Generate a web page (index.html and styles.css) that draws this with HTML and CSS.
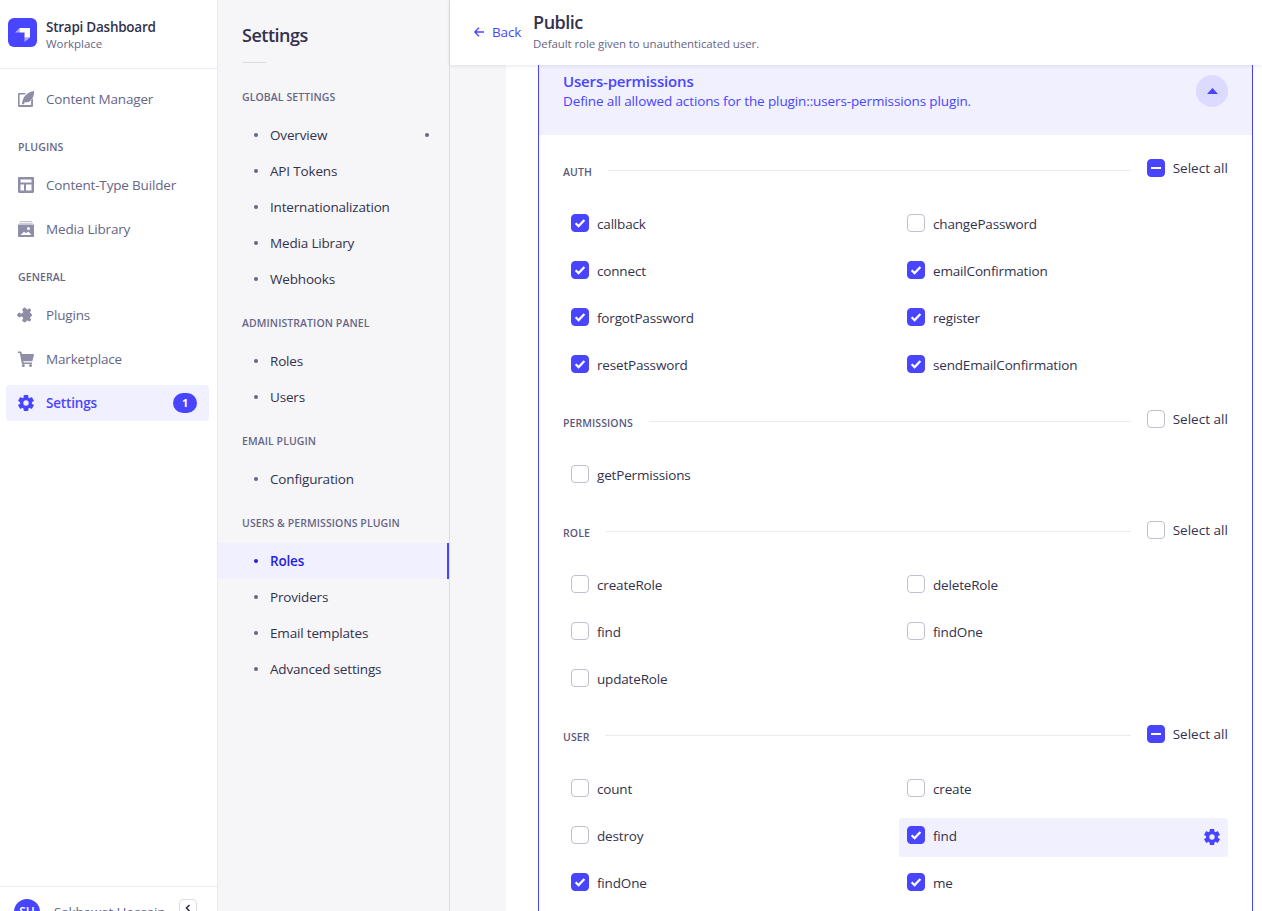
FILE: index.html
```html
<!DOCTYPE html>
<html lang="en">
<head>
    <meta charset="UTF-8">
    <title>Strapi Dashboard - Public role</title>
    <link rel="stylesheet" href="styles.css">
</head>
<body>
    <svg class="sprite" aria-hidden="true">
        <symbol id="check" viewBox="0 0 18 18"><path d="M4.600 9.200l3 2.900 5.800-6" fill="none" stroke="#fff" stroke-width="2.200"/></symbol>
        <symbol id="cog" viewBox="0 0 24 24">
            <path fill-rule="evenodd" d="M12 3a9 9 0 1 0 0 18 9 9 0 0 0 0-18zm0 5a4 4 0 1 1 0 8 4 4 0 0 1 0-8z"/>
            <rect x="8.500" y="0" width="7" height="5" rx="1"/>
            <rect x="8.500" y="0" width="7" height="5" rx="1" transform="rotate(60 12 12)"/>
            <rect x="8.500" y="0" width="7" height="5" rx="1" transform="rotate(120 12 12)"/>
            <rect x="8.500" y="0" width="7" height="5" rx="1" transform="rotate(180 12 12)"/>
            <rect x="8.500" y="0" width="7" height="5" rx="1" transform="rotate(240 12 12)"/>
            <rect x="8.500" y="0" width="7" height="5" rx="1" transform="rotate(300 12 12)"/>
        </symbol>
    </svg>

    <div class="app">
        <aside class="sidebar">
            <div class="brand">
                <svg class="brand-logo" viewBox="0 0 29 29">
                    <rect width="29" height="29" rx="6" fill="#4945ff"/>
                    <path d="M22 10v9.500h-5.500v-5h-5v-4.500z" fill="#fff"/>
                    <path d="M11.500 10v4.500h-4.500z M16.500 19.500h5.500l-5.500 4.500z" fill="#fff" opacity=".55"/>
                </svg>
                <div class="brand-text">
                    <div class="brand-name">Strapi Dashboard</div>
                    <div class="brand-sub">Workplace</div>
                </div>
            </div>
            <nav class="main-nav">
                <a class="nav-item">
                    <svg class="nav-icon" viewBox="0 0 16 16"><path d="M0 3.200C0 2.500.5 2 1.200 2H8L6.600 3.500H1.600v10.500h11.500V9.400L15 7.600v7.200c0 .7-.5 1.200-1.200 1.200H1.200C.5 16 0 15.500 0 14.800z"/><path d="M16 0c.3 4-1 9.500-6.500 11.200H6.500l-.5 2H4C4.500 6 9 1 16 0z"/></svg>
                    Content Manager
                </a>
                <div class="nav-label">Plugins</div>
                <a class="nav-item">
                    <svg class="nav-icon" viewBox="0 0 16 16"><path fill-rule="evenodd" d="M1.200 0h13.600c.7 0 1.200.5 1.200 1.200v13.600c0 .7-.5 1.200-1.200 1.200H1.200C.5 16 0 15.500 0 14.800V1.200C0 .5.500 0 1.200 0zM2.500 2.500v3h11v-3zM2.500 7.500v6h3.500v-6zM8 7.500v6h5.500v-6z"/></svg>
                    Content-Type Builder
                </a>
                <a class="nav-item">
                    <svg class="nav-icon" viewBox="0 0 16 16"><path d="M2 0h12v1H2z" opacity=".55"/><path d="M1.200 1.800h13.600v1H1.200z" opacity=".55"/><path fill-rule="evenodd" d="M1 3.500h14c.6 0 1 .4 1 1V15c0 .6-.4 1-1 1H1c-.6 0-1-.4-1-1V4.500c0-.6.4-1 1-1zM10.500 6a1.500 1.500 0 1 0 0 3 1.500 1.500 0 0 0 0-3zM2.500 14h11l-3.200-3.500-2.300 1.800-2-1.500z"/></svg>
                    Media Library
                </a>
                <div class="nav-label">General</div>
                <a class="nav-item">
                    <svg class="nav-icon puzzle" viewBox="0 0 24 24"><path transform="rotate(45 12 12)" d="M20.500 11H19V7c0-1.100-.9-2-2-2h-4V3.500C13 2.120 11.880 1 10.500 1S8 2.120 8 3.500V5H4c-1.100 0-1.990.9-1.990 2v3.800H3.500c1.490 0 2.700 1.210 2.700 2.700s-1.210 2.700-2.700 2.700H2V20c0 1.100.9 2 2 2h3.800v-1.500c0-1.490 1.210-2.700 2.700-2.700s2.700 1.210 2.700 2.700V22H17c1.100 0 2-.9 2-2v-4h1.500c1.380 0 2.500-1.120 2.500-2.500S21.880 11 20.500 11z"/></svg>
                    Plugins
                </a>
                <a class="nav-item">
                    <svg class="nav-icon" viewBox="0 0 16 16"><path d="M0 .5h2.600c.4 0 .7.2.8.6L3.900 3H15.200c.5 0 .8.400.7.900l-1.400 5.800c-.1.400-.4.600-.8.600H5.300l.3 1.200H14V13H4.600c-.4 0-.7-.2-.8-.6L1.800 2H0z"/><circle cx="5.300" cy="14.500" r="1.500"/><circle cx="12.500" cy="14.500" r="1.500"/></svg>
                    Marketplace
                </a>
                <a class="nav-item active">
                    <svg class="nav-icon"><use href="#cog"/></svg>
                    Settings
                    <span class="badge">1</span>
                </a>
            </nav>
            <div class="user-bar">
                <span class="avatar">SH</span>
                <span class="user-name">Sakhawat Hossain</span>
                <button class="collapse-btn">
                    <svg viewBox="0 0 8 8" width="8" height="8"><path d="M5.500 1L2.500 4l3 3" fill="none" stroke="#32324d" stroke-width="1.600"/></svg>
                </button>
            </div>
        </aside>

        <aside class="subnav">
            <h2 class="subnav-title">Settings</h2>
            <div class="subnav-rule"></div>
            <div class="sub-label">Global Settings</div>
            <a class="sub-item">Overview<span class="sub-dot"></span></a>
            <a class="sub-item">API Tokens</a>
            <a class="sub-item">Internationalization</a>
            <a class="sub-item">Media Library</a>
            <a class="sub-item">Webhooks</a>
            <div class="sub-label">Administration Panel</div>
            <a class="sub-item">Roles</a>
            <a class="sub-item">Users</a>
            <div class="sub-label">Email Plugin</div>
            <a class="sub-item">Configuration</a>
            <div class="sub-label">Users &amp; Permissions Plugin</div>
            <a class="sub-item active">Roles</a>
            <a class="sub-item">Providers</a>
            <a class="sub-item">Email templates</a>
            <a class="sub-item">Advanced settings</a>
        </aside>

        <main class="main">
            <header class="page-head">
                <a class="back">
                    <svg viewBox="0 0 12 12" width="12" height="12"><path d="M11 6H2M6 1.800L1.800 6 6 10.200" fill="none" stroke="#4945ff" stroke-width="1.300"/></svg>
                    Back
                </a>
                <div>
                    <h1>Public</h1>
                    <p>Default role given to unauthenticated user.</p>
                </div>
            </header>
            <div class="panel">
                <section class="accordion">
                    <div class="acc-head">
                        <div>
                            <div class="acc-title">Users-permissions</div>
                            <div class="acc-sub">Define all allowed actions for the plugin::users-permissions plugin.</div>
                        </div>
                        <button class="acc-toggle"><svg viewBox="0 0 11 6" width="11" height="6"><path d="M5.500 0l5.500 6H0z" fill="#4945ff"/></svg></button>
                    </div>

                    <div class="group">
                        <div class="group-head">
                            <span class="group-name">Auth</span>
                            <span class="group-rule"></span>
                            <label class="check-wrap"><span class="box on"><i class="dash"></i></span>Select all</label>
                        </div>
                        <div class="rows">
                            <div class="row"><span class="box on"><svg><use href="#check"/></svg></span>callback</div>
                            <div class="row"><span class="box"></span>changePassword</div>
                            <div class="row"><span class="box on"><svg><use href="#check"/></svg></span>connect</div>
                            <div class="row"><span class="box on"><svg><use href="#check"/></svg></span>emailConfirmation</div>
                            <div class="row"><span class="box on"><svg><use href="#check"/></svg></span>forgotPassword</div>
                            <div class="row"><span class="box on"><svg><use href="#check"/></svg></span>register</div>
                            <div class="row"><span class="box on"><svg><use href="#check"/></svg></span>resetPassword</div>
                            <div class="row"><span class="box on"><svg><use href="#check"/></svg></span>sendEmailConfirmation</div>
                        </div>
                    </div>

                    <div class="group">
                        <div class="group-head">
                            <span class="group-name">Permissions</span>
                            <span class="group-rule"></span>
                            <label class="check-wrap"><span class="box"></span>Select all</label>
                        </div>
                        <div class="rows">
                            <div class="row"><span class="box"></span>getPermissions</div>
                        </div>
                    </div>

                    <div class="group">
                        <div class="group-head">
                            <span class="group-name">Role</span>
                            <span class="group-rule"></span>
                            <label class="check-wrap"><span class="box"></span>Select all</label>
                        </div>
                        <div class="rows">
                            <div class="row"><span class="box"></span>createRole</div>
                            <div class="row"><span class="box"></span>deleteRole</div>
                            <div class="row"><span class="box"></span>find</div>
                            <div class="row"><span class="box"></span>findOne</div>
                            <div class="row"><span class="box"></span>updateRole</div>
                        </div>
                    </div>

                    <div class="group">
                        <div class="group-head">
                            <span class="group-name">User</span>
                            <span class="group-rule"></span>
                            <label class="check-wrap"><span class="box on"><i class="dash"></i></span>Select all</label>
                        </div>
                        <div class="rows">
                            <div class="row"><span class="box"></span>count</div>
                            <div class="row"><span class="box"></span>create</div>
                            <div class="row"><span class="box"></span>destroy</div>
                            <div class="row selected"><span class="box on"><svg><use href="#check"/></svg></span>find<svg class="row-cog"><use href="#cog"/></svg></div>
                            <div class="row"><span class="box on"><svg><use href="#check"/></svg></span>findOne</div>
                            <div class="row"><span class="box on"><svg><use href="#check"/></svg></span>me</div>
                        </div>
                    </div>
                </section>
            </div>
        </main>
    </div>
</body>
</html>
```

FILE: styles.css
```css
* {
    box-sizing: border-box;
}

body {
    font-family: "Open Sans", Arial, sans-serif;
    font-size: 13.5px;
    letter-spacing: -0.17px;
    margin: 0;
    height: 911px;
    overflow: hidden;
    background-color: #f6f6f9;
    color: #32324d;
}

.sprite {
    display: none;
}

.app {
    display: flex;
    height: 911px;
}

/* left nav */
.sidebar {
    width: 218px;
    flex: none;
    display: flex;
    flex-direction: column;
    background-color: #fff;
    border-right: 1px solid #eaeaef;
}

.brand {
    display: flex;
    align-items: center;
    gap: 9px;
    height: 69px;
    padding: 0 8px 4px;
    border-bottom: 1px solid #eaeaef;
}

.brand-logo {
    width: 29px;
    height: 29px;
    flex: none;
}

.brand-text {
    margin-top: 6px;
}

.brand-name {
    font-size: 13.5px;
    font-weight: 600;
    line-height: 18px;
    letter-spacing: -0.25px;
}

.brand-sub {
    font-size: 11.5px;
    line-height: 16px;
    letter-spacing: -0.05px;
    color: #666687;
}

.main-nav {
    flex: 1;
    padding: 12px 8px 0 6px;
}

.nav-item {
    display: flex;
    align-items: center;
    height: 36px;
    margin-bottom: 8px;
    padding: 0 12px;
    gap: 12px;
    border-radius: 4px;
    color: #666687;
}

.nav-icon {
    width: 16px;
    height: 16px;
    flex: none;
    fill: #8e8ea9;
}

.nav-icon.puzzle {
    overflow: visible;
}

.nav-item.active {
    background-color: #f0f0ff;
    color: #4945ff;
    font-weight: 600;
}

.nav-item.active .nav-icon {
    fill: #4945ff;
}

.badge {
    margin-left: auto;
    width: 24px;
    height: 20px;
    line-height: 20px;
    border-radius: 10px;
    background-color: #4945ff;
    color: #fff;
    font-size: 11px;
    font-weight: 700;
    text-align: center;
}

.nav-label {
    margin: 24px 0 14px 12px;
    font-size: 10.5px;
    font-weight: 600;
    line-height: 12px;
    letter-spacing: 0.08px;
    text-transform: uppercase;
    color: #666687;
}

.user-bar {
    display: flex;
    align-items: flex-start;
    height: 25px;
    padding: 12px 20px 0 14px;
    border-top: 1px solid #eaeaef;
}

.avatar {
    width: 26px;
    height: 26px;
    flex: none;
    border-radius: 50%;
    background-color: #4945ff;
    color: #fff;
    font-size: 12px;
    font-weight: 600;
    line-height: 26px;
    text-align: center;
}

.user-name {
    margin-left: 14px;
    flex: 1;
    white-space: nowrap;
    line-height: 26px;
    color: #666687;
}

.collapse-btn {
    width: 18px;
    height: 18px;
    flex: none;
    padding: 0;
    display: flex;
    align-items: center;
    justify-content: center;
    background-color: #fff;
    border: 1px solid #dcdce4;
    border-radius: 4px;
}

/* settings nav */
.subnav {
    width: 232px;
    flex: none;
    padding-top: 24px;
    background-color: #f6f6f9;
    border-right: 1px solid #dcdce4;
}

.subnav-title {
    margin: 0 0 0 24px;
    font-size: 18px;
    font-weight: 600;
    line-height: 22px;
    letter-spacing: -0.5px;
}

.subnav-rule {
    width: 24px;
    height: 1px;
    margin: 16px 0 27px 24px;
    background-color: #dcdce4;
}

.sub-label {
    margin: 19px 0 13px 24px;
    font-size: 10.5px;
    font-weight: 600;
    line-height: 14px;
    letter-spacing: 0.08px;
    text-transform: uppercase;
    color: #666687;
}

.sub-item {
    position: relative;
    display: flex;
    align-items: center;
    height: 36px;
    padding: 0 20px 0 52px;
}

.sub-item::before {
    content: "";
    position: absolute;
    left: 36px;
    top: 16px;
    width: 4px;
    height: 4px;
    border-radius: 50%;
    background-color: #666687;
}

.sub-dot {
    width: 4px;
    height: 4px;
    margin-left: auto;
    border-radius: 50%;
    background-color: #666687;
}

.sub-item.active {
    background-color: #f0f0ff;
    border-right: 2px solid #4945ff;
    color: #271fe0;
    font-weight: 600;
}

.sub-item.active::before {
    background-color: #271fe0;
}

/* page */
.main {
    flex: 1;
    min-width: 0;
    display: flex;
    flex-direction: column;
}

.page-head {
    position: relative;
    z-index: 1;
    display: flex;
    align-items: flex-start;
    flex: none;
    height: 65px;
    padding: 10px 0 0 23px;
    gap: 12px;
    background-color: #fff;
    box-shadow: 0 1px 4px rgba(33, 33, 52, 0.1);
}

.page-head h1 {
    margin: 0;
    font-size: 18px;
    font-weight: 600;
    line-height: 24px;
    letter-spacing: -0.5px;
}

.page-head p {
    margin: 2px 0 0;
    font-size: 11.5px;
    line-height: 16px;
    letter-spacing: -0.09px;
    color: #666687;
}

.back {
    display: flex;
    align-items: center;
    gap: 7px;
    height: 44px;
    color: #4945ff;
}

.panel {
    flex: 1;
    margin-left: 56px;
    padding: 0 9px 0 32px;
    background-color: #fff;
    overflow: hidden;
}

.accordion {
    height: 900px;
    border-left: 1px solid #4945ff;
    border-right: 1px solid #4945ff;
}

.acc-head {
    display: flex;
    align-items: flex-start;
    justify-content: space-between;
    height: 70px;
    padding: 6px 24px 0;
    background-color: #f0f0ff;
    color: #4945ff;
}

.acc-title {
    font-size: 15px;
    font-weight: 600;
    line-height: 21px;
}

.acc-sub {
    line-height: 18px;
    letter-spacing: -0.12px;
}

.acc-toggle {
    width: 32px;
    height: 32px;
    margin-top: 4px;
    padding: 0;
    display: flex;
    align-items: center;
    justify-content: center;
    border: none;
    border-radius: 50%;
    background-color: #dcdbff;
}

.group {
    padding: 0 24px;
    margin-bottom: 24.75px;
}

.acc-head + .group {
    margin-top: 24px;
}

.group-head {
    display: flex;
    align-items: center;
    height: 18px;
    gap: 16px;
    margin-bottom: 28.5px;
}

.group-name {
    padding-top: 7px;
    font-size: 10.5px;
    font-weight: 600;
    letter-spacing: 0.08px;
    text-transform: uppercase;
    color: #5a5a7a;
}

.group-rule {
    flex: 1;
    height: 1px;
    margin-top: 4px;
    background-color: #eaeaef;
}

.check-wrap {
    display: flex;
    align-items: center;
    gap: 8px;
    letter-spacing: 0.03px;
}

.rows {
    display: grid;
    grid-template-columns: 329px 329px;
    gap: 8px 7px;
}

.row {
    display: flex;
    align-items: flex-start;
    height: 39px;
    padding: 8px;
    gap: 8px;
    border-radius: 4px;
    line-height: 20px;
}

.row.selected {
    background-color: #f0f0ff;
}

.row-cog {
    width: 16px;
    height: 16px;
    margin: 3px 0 0 auto;
    fill: #4945ff;
}

.box {
    display: flex;
    align-items: center;
    justify-content: center;
    width: 18px;
    height: 18px;
    flex: none;
    border: 1px solid #c0c0cf;
    border-radius: 4px;
    background-color: #fff;
}

.box.on {
    border-color: #4945ff;
    background-color: #4945ff;
}

.box svg {
    width: 18px;
    height: 18px;
    flex: none;
}

.dash {
    display: block;
    width: 10px;
    height: 2px;
    background-color: #fff;
}
```
